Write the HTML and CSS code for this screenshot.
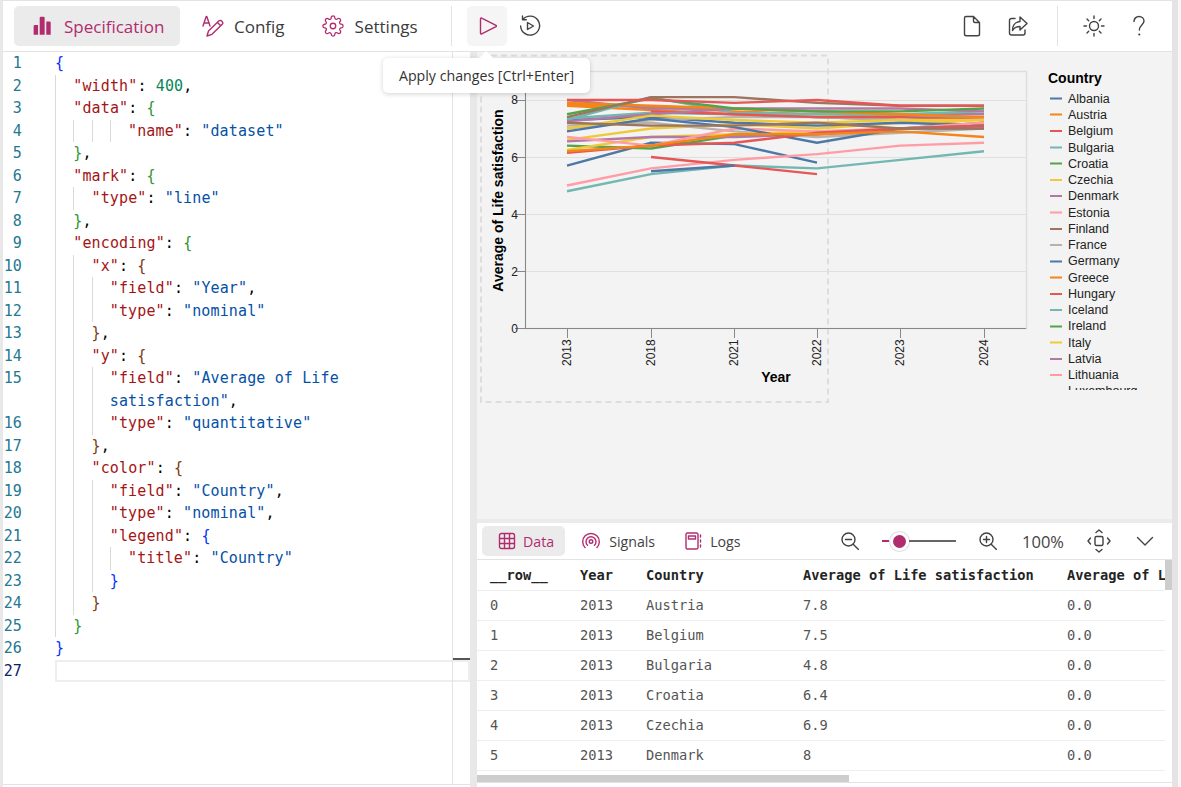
FILE: index.html
```html
<!DOCTYPE html>
<html lang="en">
<head>
<meta charset="utf-8">
<title>Vega Lite editor</title>
<link rel="stylesheet" href="styles.css">
</head>
<body>
<div class="app">
  <header class="toolbar">
    <button class="tab active">
      <svg class="ic22" viewBox="0 0 20 20"><path class="fill" d="M8 1.500h2.500a1 1 0 0 1 1 1V18H7V2.500a1 1 0 0 1 1-1zM13 6h3a1 1 0 0 1 1 1v11h-4zM2.800 9H5.500v9H1.500v-7.700A1.300 1.300 0 0 1 2.800 9z"/></svg>
      <span>Specification</span>
    </button>
    <button class="tab">
      <svg class="ic22" viewBox="0 0 22 22"><path class="line" d="M1 11 4.200 1.500h.6L8 11M2.200 8h5M20 6.500a2 2 0 0 0-3-.7L6.500 16 5 21l5-1.700L20.500 9a2 2 0 0 0-.5-2.500zM15.500 7.500l3 3"/></svg>
      <span>Config</span>
    </button>
    <button class="tab">
      <svg class="ic22" viewBox="0 0 24 24"><circle class="line" cx="12" cy="12" r="3"/><path class="line" d="M19.400 15a1.650 1.650 0 0 0 .33 1.820l.06.06a2 2 0 0 1 0 2.830 2 2 0 0 1-2.830 0l-.06-.06a1.650 1.650 0 0 0-1.820-.33 1.650 1.650 0 0 0-1 1.510V21a2 2 0 0 1-2 2 2 2 0 0 1-2-2v-.09A1.650 1.650 0 0 0 9 19.400a1.650 1.650 0 0 0-1.820.33l-.06.06a2 2 0 0 1-2.830 0 2 2 0 0 1 0-2.830l.06-.06a1.650 1.650 0 0 0 .33-1.820 1.650 1.650 0 0 0-1.510-1H3a2 2 0 0 1-2-2 2 2 0 0 1 2-2h.09A1.650 1.650 0 0 0 4.600 9a1.650 1.650 0 0 0-.33-1.820l-.06-.06a2 2 0 0 1 0-2.830 2 2 0 0 1 2.830 0l.06.06a1.650 1.650 0 0 0 1.820.33H9a1.650 1.650 0 0 0 1-1.510V3a2 2 0 0 1 2-2 2 2 0 0 1 2 2v.09a1.650 1.650 0 0 0 1 1.510 1.650 1.650 0 0 0 1.820-.33l.06-.06a2 2 0 0 1 2.830 0 2 2 0 0 1 0 2.830l-.06.06a1.650 1.650 0 0 0-.33 1.820V9a1.650 1.650 0 0 0 1.510 1H21a2 2 0 0 1 2 2 2 2 0 0 1-2 2h-.09a1.650 1.650 0 0 0-1.510 1z"/></svg>
      <span>Settings</span>
    </button>
    <div class="sep"></div>
    <button class="iconbtn hover">
      <svg class="ic20" viewBox="0 0 20 20"><path class="line" d="M3.500 2.800v14.400a.8.8 0 0 0 1.200.7l14.300-7.200a.8.8 0 0 0 0-1.400L4.700 2.100a.8.8 0 0 0-1.200.7z"/></svg>
    </button>
    <button class="iconbtn">
      <svg class="ic22" viewBox="0 0 22 22"><path class="line dark" d="M3.800 4.500A9.500 9.500 0 1 1 1.600 11M3.500 1v3.800h3.800"/><path class="line dark" d="M8.500 7.500v7l6-3.500z"/></svg>
    </button>
    <div class="grow"></div>
    <button class="iconbtn">
      <svg class="ic22" viewBox="0 0 22 22"><path class="line dark" d="M5 1.500h7.500L18.500 7.500V19a1.800 1.800 0 0 1-1.800 1.800H5.300A1.800 1.800 0 0 1 3.500 19V3A1.500 1.500 0 0 1 5 1.500zM12.500 1.500V6a1.500 1.500 0 0 0 1.500 1.500h4.500"/></svg>
    </button>
    <button class="iconbtn flush">
      <svg class="ic22" viewBox="0 0 22 22"><path class="line dark" d="M8 3.500H4.500A2 2 0 0 0 2.500 5.500V18a2 2 0 0 0 2 2H16a2 2 0 0 0 2-2v-3M13 2l7 6.500-7 6.500v-3.500c-3.500 0-6 1-7.500 4 0-5 2.500-8.500 7.500-9z"/></svg>
    </button>
    <div class="sep sep-end"></div>
    <button class="iconbtn sun">
      <svg class="ic22" viewBox="0 0 22 22"><circle class="line dark" cx="11" cy="11" r="4.500"/><path class="line dark" d="M11 1v2.500M11 18.500V21M1 11h2.500M18.500 11H21M4 4l1.700 1.700M16.300 16.300 18 18M4 18l1.700-1.700M16.300 5.700 18 4"/></svg>
    </button>
    <button class="iconbtn flush">
      <svg class="ic22" viewBox="0 0 22 22"><path class="line dark" d="M6 6.500C6 3.500 8.200 1.500 11 1.500s5 2 5 4.600c0 3.900-4.700 4-4.700 8.900"/><circle class="fill dark" cx="11.300" cy="19.500" r="1.100"/></svg>
    </button>
  </header>

  <div class="main">
    <section class="editor">
      <div class="code">
        <div class="ln"><b>1</b><code><s class="b1">{</s></code></div>
        <div class="ln"><b>2</b><code><i></i><em>"width"</em>: <u>400</u>,</code></div>
        <div class="ln"><b>3</b><code><i></i><em>"data"</em>: <s class="b2">{</s></code></div>
        <div class="ln"><b>4</b><code><i></i><i></i><i></i><i></i><em>"name"</em>: <q>"dataset"</q></code></div>
        <div class="ln"><b>5</b><code><i></i><s class="b2">}</s>,</code></div>
        <div class="ln"><b>6</b><code><i></i><em>"mark"</em>: <s class="b2">{</s></code></div>
        <div class="ln"><b>7</b><code><i></i><i></i><em>"type"</em>: <q>"line"</q></code></div>
        <div class="ln"><b>8</b><code><i></i><s class="b2">}</s>,</code></div>
        <div class="ln"><b>9</b><code><i></i><em>"encoding"</em>: <s class="b2">{</s></code></div>
        <div class="ln"><b>10</b><code><i></i><i></i><em>"x"</em>: <s class="b3">{</s></code></div>
        <div class="ln"><b>11</b><code><i></i><i></i><i></i><em>"field"</em>: <q>"Year"</q>,</code></div>
        <div class="ln"><b>12</b><code><i></i><i></i><i></i><em>"type"</em>: <q>"nominal"</q></code></div>
        <div class="ln"><b>13</b><code><i></i><i></i><s class="b3">}</s>,</code></div>
        <div class="ln"><b>14</b><code><i></i><i></i><em>"y"</em>: <s class="b3">{</s></code></div>
        <div class="ln"><b>15</b><code><i></i><i></i><i></i><em>"field"</em>: <q>"Average of Life</q></code></div>
        <div class="ln"><b></b><code><i></i><i></i><i></i><q>satisfaction"</q>,</code></div>
        <div class="ln"><b>16</b><code><i></i><i></i><i></i><em>"type"</em>: <q>"quantitative"</q></code></div>
        <div class="ln"><b>17</b><code><i></i><i></i><s class="b3">}</s>,</code></div>
        <div class="ln"><b>18</b><code><i></i><i></i><em>"color"</em>: <s class="b3">{</s></code></div>
        <div class="ln"><b>19</b><code><i></i><i></i><i></i><em>"field"</em>: <q>"Country"</q>,</code></div>
        <div class="ln"><b>20</b><code><i></i><i></i><i></i><em>"type"</em>: <q>"nominal"</q>,</code></div>
        <div class="ln"><b>21</b><code><i></i><i></i><i></i><em>"legend"</em>: <s class="b1">{</s></code></div>
        <div class="ln"><b>22</b><code><i></i><i></i><i></i><i></i><em>"title"</em>: <q>"Country"</q></code></div>
        <div class="ln"><b>23</b><code><i></i><i></i><i></i><s class="b1">}</s></code></div>
        <div class="ln"><b>24</b><code><i></i><i></i><s class="b3">}</s></code></div>
        <div class="ln"><b>25</b><code><i></i><s class="b2">}</s></code></div>
        <div class="ln"><b>26</b><code><s class="b1">}</s></code></div>
        <div class="ln current"><b>27</b><code></code></div>
      </div>
      <div class="ruler"></div>
      <div class="ruler-mark"></div>
    </section>

    <div class="divider"></div>

    <section class="right">
      <div class="canvas">
        <svg class="chart" viewBox="477 52 695 467" role="img">
          <rect class="frame" x="481" y="55.500" width="347" height="346.500"/>
          <rect class="plot" x="525.500" y="71.500" width="501" height="257"/>
          <path class="grid" d="M525 100.500h501M525 157.500h501M525 214.500h501M525 271.500h501"/>
          <path class="axis" d="M525.500 71v257.500M515 328.500h511M515 100.500h10M515 157.500h10M515 214.500h10M515 271.500h10M567.500 329v9M651.500 329v9M734.500 329v9M817.500 329v9M900.500 329v9M984.500 329v9"/>
          <g transform="translate(0 328) scale(1 -28.5)">
            <polyline class="c1" points="567,5.7 651,6.5 734.500,6.45 817,5.8"/>
            <polyline class="c4" points="567,4.8 651,5.4 734.500,5.7 817,5.6 900.500,5.9 984,6.2"/>
            <polyline class="c2" points="567,7.8 651,7.65 734.500,7.5 817,7.4 900.500,7.3 984,7.1"/>
            <polyline class="c2" points="567,7.85 651,7.75 734.500,7.6 817,7.5 900.500,7.45 984,7.3"/>
            <polyline class="c5" points="567,6.4 651,6.3 734.500,6.75 817,6.8 900.500,7 984,7.2"/>
            <polyline class="c6" points="567,6.6 651,7 734.500,7.15 817,7 900.500,7.2 984,7.3"/>
            <polyline class="c7" points="567,8 651,7.7 734.500,7.7 817,7.6 900.500,7.5 984,7.5"/>
            <polyline class="c8" points="567,5 651,5.6 734.500,5.9 817,6.1 900.500,6.4 984,6.5"/>
            <polyline class="c10" points="567,7.1 651,7.2 734.500,6.9 817,6.7 900.500,6.85 984,7"/>
            <polyline class="c1" points="567,7.3 651,7.4 734.500,7.2 817,7.1 900.500,7.2 984,7.1"/>
            <polyline class="c3" points="651,6 734.500,5.7 817,5.4"/>
            <polyline class="c4" points="567,7.3 651,8.1 734.500,7.55 817,7.5 900.500,7.5 984,7.6"/>
            <polyline class="c6" points="567,6.25 651,6.7 734.500,6.8 817,6.9 900.500,7 984,7.1"/>
            <polyline class="c7" points="567,6.55 651,6.7 734.500,6.7 817,6.8 900.500,7 984,7"/>
            <polyline class="c8" points="567,6.7 651,6.4 734.500,7 817,6.9 900.500,7 984,7.2"/>
            <polyline class="c10" points="567,7 651,7.3 734.500,7.4 817,7.4 900.500,7.3 984,7.4"/>
            <polyline class="c1" points="567,6.9 651,7.35 734.500,7.05 817,6.5 900.500,7 984,7.1"/>
            <polyline class="c4" points="567,7.35 651,7.55 734.500,7.5 817,7.4 900.500,7.4 984,7.4"/>
            <polyline class="c3" points="567,6.15 651,6.4 734.500,6.5 817,6.85 900.500,7 984,7.1"/>
            <polyline class="c2" points="567,6.2 651,6.4 734.500,6.8 817,6.8 900.500,6.9 984,6.7"/>
            <polyline class="c1" points="651,5.5 734.500,5.7"/>
            <polyline class="c3" points="651,7.6 734.500,7.5 817,7.4 900.500,7.4 984,7.3"/>
            <polyline class="c2" points="567,7.9 651,7.8 734.500,7.7 817,7.6 900.500,7.5 984,7.4"/>
            <polyline class="c7" points="567,7.25 651,7.5 734.500,7.7 817,7.7 900.500,7.7 984,7.6"/>
            <polyline class="c5" points="567,7.5 651,8.05 734.500,7.7 817,7.6 900.500,7.6 984,7.7"/>
            <polyline class="c6" points="567,7 651,7.45 734.500,7.3 817,7.2 900.500,7.3 984,7.3"/>
            <polyline class="c9" points="567,7.2 651,7.1 734.500,7.1 817,7.2 900.500,7 984,7"/>
            <polyline class="c9" points="567,7.4 651,8.1 734.500,8.1 817,7.9 900.500,7.8 984,7.8"/>
            <polyline class="c3" points="567,8 651,8 734.500,7.9 817,8 900.500,7.8 984,7.8"/>
          </g>
          <g class="tick-y">
            <text x="518" y="103.500">8</text>
            <text x="518" y="161.500">6</text>
            <text x="518" y="218.500">4</text>
            <text x="518" y="275.500">2</text>
            <text x="518" y="332.500">0</text>
          </g>
          <g class="tick-x">
            <text transform="translate(571 366) rotate(-90)">2013</text>
            <text transform="translate(655 366) rotate(-90)">2018</text>
            <text transform="translate(738 366) rotate(-90)">2021</text>
            <text transform="translate(821 366) rotate(-90)">2022</text>
            <text transform="translate(904 366) rotate(-90)">2023</text>
            <text transform="translate(988 366) rotate(-90)">2024</text>
          </g>
          <text class="title" transform="translate(503 200.500) rotate(-90)">Average of Life satisfaction</text>
          <text class="title" x="776" y="382">Year</text>
          <text class="title start" x="1048" y="83">Country</text>
          <g class="legend">
            <svg x="1040" y="90" width="120" height="300" viewBox="1040 90 120 300">
              <path class="c1" d="M1050 98.500h12"/><text x="1068" y="103">Albania</text>
              <path class="c2" d="M1050 114.500h12"/><text x="1068" y="119">Austria</text>
              <path class="c3" d="M1050 131h12"/><text x="1068" y="135">Belgium</text>
              <path class="c4" d="M1050 147.500h12"/><text x="1068" y="152">Bulgaria</text>
              <path class="c5" d="M1050 163.500h12"/><text x="1068" y="168">Croatia</text>
              <path class="c6" d="M1050 180h12"/><text x="1068" y="184">Czechia</text>
              <path class="c7" d="M1050 196h12"/><text x="1068" y="200">Denmark</text>
              <path class="c8" d="M1050 212.500h12"/><text x="1068" y="217">Estonia</text>
              <path class="c9" d="M1050 229h12"/><text x="1068" y="233">Finland</text>
              <path class="c10" d="M1050 245h12"/><text x="1068" y="249">France</text>
              <path class="c1" d="M1050 261.500h12"/><text x="1068" y="265">Germany</text>
              <path class="c2" d="M1050 277.500h12"/><text x="1068" y="282">Greece</text>
              <path class="c3" d="M1050 294h12"/><text x="1068" y="298">Hungary</text>
              <path class="c4" d="M1050 310h12"/><text x="1068" y="314">Iceland</text>
              <path class="c5" d="M1050 326.500h12"/><text x="1068" y="330">Ireland</text>
              <path class="c6" d="M1050 342.500h12"/><text x="1068" y="347">Italy</text>
              <path class="c7" d="M1050 359h12"/><text x="1068" y="363">Latvia</text>
              <path class="c8" d="M1050 375h12"/><text x="1068" y="379">Lithuania</text>
              <path class="c10" d="M1050 391h12"/><text x="1068" y="395">Luxembourg</text>
            </svg>
          </g>
        </svg>
      </div>
      <div class="band"></div>
      <div class="panel">
        <div class="panel-tabs">
          <button class="ptab active">
            <svg class="ic18" viewBox="0 0 18 18"><path class="line" d="M3.500 1.500h11a2 2 0 0 1 2 2v11a2 2 0 0 1-2 2h-11a2 2 0 0 1-2-2v-11a2 2 0 0 1 2-2zM1.500 6.500h15M1.500 11.500h15M6.500 1.500v15M11.500 1.500v15"/></svg>
            <span>Data</span>
          </button>
          <button class="ptab">
            <svg class="ic18" viewBox="0 0 18 18"><path class="line" d="M3 15.500a8.300 8.300 0 1 1 12 0M5.500 13.300a5 5 0 1 1 7 0"/><circle class="line" cx="9" cy="9.500" r="1.800"/></svg>
            <span>Signals</span>
          </button>
          <button class="ptab">
            <svg class="ic18" viewBox="0 0 18 18"><path class="line" d="M3.500 1h9A1.500 1.500 0 0 1 14 2.500v13a1.500 1.500 0 0 1-1.500 1.500h-9A1.500 1.500 0 0 1 2 15.500v-13A1.500 1.500 0 0 1 3.500 1zM4.500 4h7v3h-7zM16.500 3v2M16.500 8v2M16.500 13v2"/></svg>
            <span>Logs</span>
          </button>
          <div class="grow"></div>
          <div class="zoombar">
            <svg class="ic18" viewBox="0 0 18 18"><circle class="line dark" cx="7.500" cy="7.500" r="6.500"/><path class="line dark" d="M12.200 12.200 17.500 17.500M4.500 7.500h6"/></svg>
            <div class="slider"><span class="seg"></span><span class="thumb"></span><span class="rail"></span></div>
            <svg class="ic18" viewBox="0 0 18 18"><circle class="line dark" cx="7.500" cy="7.500" r="6.500"/><path class="line dark" d="M12.200 12.200 17.500 17.500M4.500 7.500h6M7.500 4.500v6"/></svg>
            <span class="pct">100%</span>
            <svg class="ic24" viewBox="0 0 24 24"><rect class="line dark" x="8" y="7.500" width="8" height="9" rx="1.500"/><path class="line dark" d="M9 3.500l3-2.500 3 2.500M9 20.500l3 2.500 3-2.500M3.500 9 1 12l2.500 3M20.500 9 23 12l-2.500 3"/></svg>
            <svg class="ic18 chev" viewBox="0 0 18 18"><path class="line dark" d="M1.500 5.500 9 13l7.500-7.500"/></svg>
          </div>
        </div>
        <div class="grid-wrap">
          <div class="table-clip">
            <table class="table">
              <thead>
                <tr><th>__row__</th><th>Year</th><th>Country</th><th>Average of Life satisfaction</th><th>Average of L</th></tr>
              </thead>
              <tbody>
                <tr><td>0</td><td>2013</td><td>Austria</td><td>7.8</td><td>0.0</td></tr>
                <tr><td>1</td><td>2013</td><td>Belgium</td><td>7.5</td><td>0.0</td></tr>
                <tr><td>2</td><td>2013</td><td>Bulgaria</td><td>4.8</td><td>0.0</td></tr>
                <tr><td>3</td><td>2013</td><td>Croatia</td><td>6.4</td><td>0.0</td></tr>
                <tr><td>4</td><td>2013</td><td>Czechia</td><td>6.9</td><td>0.0</td></tr>
                <tr><td>5</td><td>2013</td><td>Denmark</td><td>8</td><td>0.0</td></tr>
              </tbody>
            </table>
          </div>
          <div class="vscroll"><span></span></div>
        </div>
        <div class="hscroll"><span></span></div>
      </div>
    </section>
  </div>

  <div class="tooltip">Apply changes [Ctrl+Enter]</div>
</div>
</body>
</html>
```
FILE: styles.css
```css
* { box-sizing: border-box; }
html, body { margin: 0; height: 100%; background: #f7f7f7; overflow: hidden; }
body { font-family: "Open Sans", "Noto Sans", "Liberation Sans", sans-serif; color: #3c3c3c; }
.app { position: relative; width: 1178px; height: 787px; border-top: 1px solid #e3e3e3; border-left: 3px solid #e8e8e8; border-right: 6px solid #e4e4e4; display: flex; flex-direction: column; background: #fff; }
button { font: inherit; color: inherit; background: none; border: 0; padding: 0; display: flex; align-items: center; }
svg { display: block; flex: none; }

.toolbar { height: 51px; flex: none; display: flex; align-items: center; padding: 0 13px 0 11px; border-bottom: 1px solid #e3e3e3; }
.tab { height: 40px; padding: 0 16px; gap: 11px; border-radius: 5px; font-size: 17px; font-weight: 500; }
.tab.active { width: 166px; padding-left: 18px; gap: 10px; color: #b12c6f; background: #ebebeb; }
.tab:nth-child(2) { padding-left: 22px; padding-right: 21px; gap: 10px; }
.sep { width: 1px; height: 40px; flex: none; background: #e3e3e3; margin: 0 15px 0 17px; }
.sep.sep-end { margin: 0 16px 0 19px; }
.iconbtn { width: 40px; height: 40px; flex: none; justify-content: center; border-radius: 5px; margin-right: 6px; }
.iconbtn.hover { background: #f5f5f5; margin-right: 3px; }
.iconbtn.flush { margin-right: 0; }
.iconbtn.sun { margin-right: 5px; }
.grow { flex: 1; }
.ic18 { width: 18px; height: 18px; }
.ic20 { width: 20px; height: 20px; }
.ic22 { width: 22px; height: 22px; }
.ic24 { width: 24px; height: 24px; }
.fill { fill: #b12c6f; stroke: none; }
.fill.dark { fill: #424242; }
.line { fill: none; stroke: #b12c6f; stroke-width: 1.4; stroke-linecap: round; stroke-linejoin: round; }
.line.dark { stroke: #424242; }

.main { flex: 1; min-height: 0; display: flex; }
.editor { position: relative; width: 467px; flex: none; height: 733px; border-bottom: 1px solid #e3e3e3; overflow: hidden; }
.code { font-family: "DejaVu Sans Mono", "Liberation Mono", monospace; font-size: 15px; letter-spacing: .13px; color: #000; }
.ln { height: 22.5px; line-height: 22.5px; display: flex; white-space: pre; }
.ln b { width: 19px; flex: none; text-align: right; font-weight: 400; color: #237893; }
.ln code { font: inherit; flex: 1; margin-left: 33px; display: block; height: 22.5px; }
.ln i { display: inline-block; width: 18.25px; height: 22.5px; vertical-align: top; border-left: 1px solid #d9d9d9; }
.ln em { font-style: normal; color: #a31515; }
.ln q { quotes: none; color: #0451a5; }
.ln u { text-decoration: none; color: #098658; }
.ln s { text-decoration: none; }
.b1 { color: #0431fa; }
.b2 { color: #319331; }
.b3 { color: #7b3814; }
.current b { color: #0b216f; }
.current code { border: 2px solid #eeeeee; height: 22px; }
.ruler { position: absolute; left: 449px; top: 0; bottom: 0; width: 1px; background: #e3e3e3; }
.ruler-mark { position: absolute; left: 450px; top: 606px; width: 17px; height: 2px; background: #555; }

.divider { width: 7px; flex: none; background: #e8e8e8; }
.right { flex: 1; min-width: 0; display: flex; flex-direction: column; }
.canvas { height: 467px; flex: none; background: #f3f3f3; }
.chart { width: 695px; height: 467px; }
.frame { fill: none; stroke: #dddddd; stroke-width: 2; stroke-dasharray: 6 4; }
.plot { fill: none; stroke: #dedede; stroke-width: 1.5; }
.grid { fill: none; stroke: #dfdfdf; stroke-width: 1; }
.axis { fill: none; stroke: #888; stroke-width: 1; }
.chart text { font-family: "Liberation Sans", Arial, sans-serif; font-size: 12px; fill: #222; }
.chart .legend text { font-size: 12.5px; }
.tick-y text { text-anchor: end; }
.chart .title { font-size: 14px; font-weight: 700; fill: #000; text-anchor: middle; }
.chart .title.start { text-anchor: start; }
polyline { fill: none; stroke-width: 2.4; vector-effect: non-scaling-stroke; }
.legend path { fill: none; stroke-width: 2; }
.c1 { stroke: #4c78a8; }
.c2 { stroke: #f58518; }
.c3 { stroke: #e45756; }
.c4 { stroke: #72b7b2; }
.c5 { stroke: #54a24b; }
.c6 { stroke: #eeca3b; }
.c7 { stroke: #b279a2; }
.c8 { stroke: #ff9da6; }
.c9 { stroke: #9d755d; }
.c10 { stroke: #bab0ac; }

.band { height: 4px; flex: none; background: #ebebeb; }
.panel { flex: 1; min-height: 0; display: flex; flex-direction: column; }
.panel-tabs { height: 37px; flex: none; display: flex; align-items: center; padding: 0 0 0 5px; border-bottom: 1px solid #e3e3e3; font-size: 14.2px; }
.ptab { height: 30px; padding: 0 11px 0 16px; gap: 7px; border-radius: 5px; color: #424242; }
.ptab:nth-child(2) { padding: 0 16px 0 17px; gap: 9px; }
.ptab:nth-child(3) { padding: 0 0 0 13px; gap: 8px; }
.ptab.active { color: #b12c6f; background: #ebebeb; }
.zoombar { display: flex; align-items: center; }
.slider { width: 74px; height: 20px; margin: 0 23px; display: flex; align-items: center; }
.seg { width: 7px; height: 2px; flex: none; background: #b12c6f; }
.thumb { width: 13px; height: 13px; margin: 0 3px 0 4px; border-radius: 50%; background: #b12c6f; box-shadow: 0 0 0 3px #fff, 0 0 0 4px #ddd; flex: none; }
.rail { flex: 1; height: 2px; background: #666; }
.pct { font-size: 16.5px; font-weight: 500; margin: 0 23px 0 25px; color: #444; }
.chev { margin: 0 18px 0 25px; }
.grid-wrap { height: 215px; flex: none; display: flex; }
.table-clip { flex: 1; min-width: 0; overflow: hidden; }
.vscroll { width: 7px; flex: none; }
.vscroll span { display: block; height: 30px; background: #cdcdcd; }
.table { border-collapse: collapse; table-layout: fixed; width: 100%; font-family: "DejaVu Sans Mono", "Liberation Mono", monospace; font-size: 13.7px; }
.table th, .table td { height: 30px; padding: 0 0 0 13px; text-align: left; white-space: nowrap; overflow: hidden; border-bottom: 1px solid #eeeeee; }
.table th { font-weight: 700; color: #242424; }
.table td { color: #555; }
.table th:nth-child(1) { width: 90px; }
.table th:nth-child(2) { width: 66px; }
.table th:nth-child(3) { width: 157px; }
.table th:nth-child(4) { width: 264px; }
.hscroll { height: 8px; flex: none; border-bottom: 1px solid #e3e3e3; }
.hscroll span { display: block; width: 372px; height: 7px; background: #cdcdcd; }

.tooltip { position: absolute; left: 380px; top: 57px; width: 207px; height: 35px; background: #fff; border-radius: 5px; box-shadow: 0 1px 5px rgba(0,0,0,.18); font-size: 14.2px; line-height: 35px; text-align: center; color: #333; }
.tooltip::before { content: ""; position: absolute; left: 98px; top: -5px; width: 10px; height: 10px; background: #fff; transform: rotate(45deg); }
```
